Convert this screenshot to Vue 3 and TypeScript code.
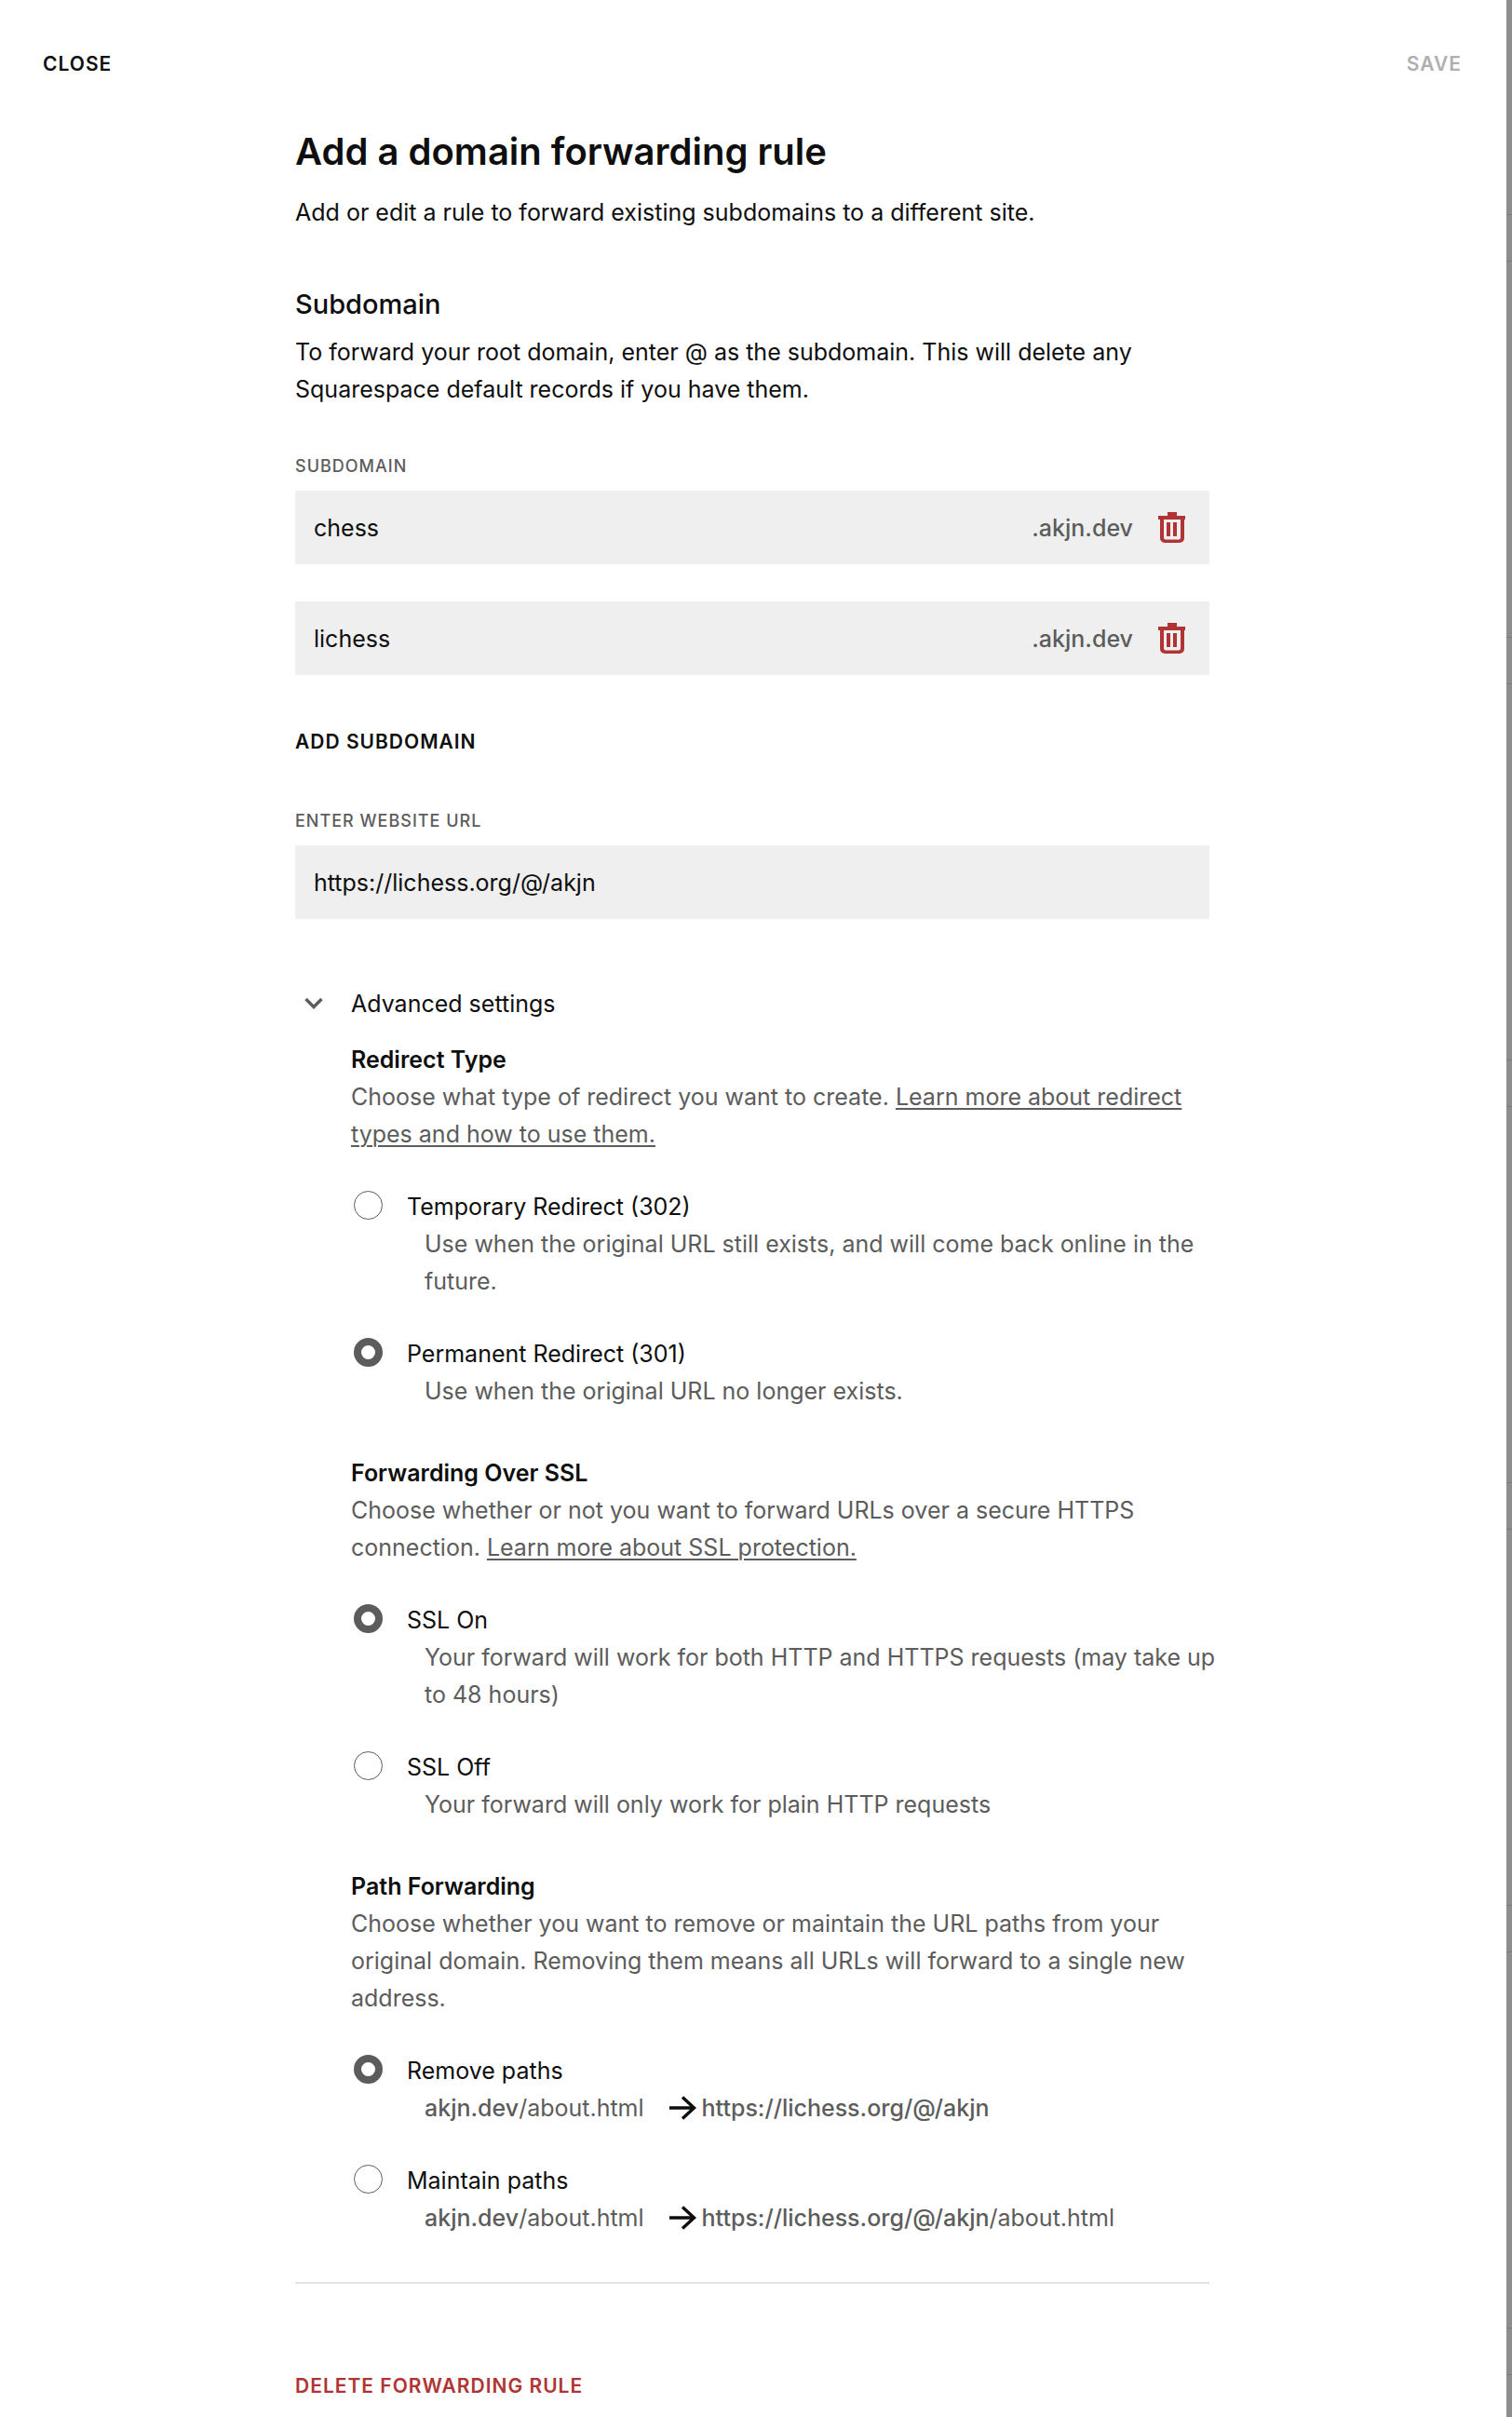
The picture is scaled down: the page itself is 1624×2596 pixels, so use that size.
<script setup lang="ts">
import { ref } from 'vue'

interface Choice {
  value: string
  label: string
  text?: string
  suffix?: string
}

interface Group {
  name: string
  title: string
  text: string
  link?: string
  choices: Choice[]
}

const domain = 'akjn.dev'
const subdomains = ref<string[]>(['chess', 'lichess'])
const url = ref('https://lichess.org/@/akjn')
const open = ref(true)

const selected = ref<Record<string, string>>({
  redirect: '301',
  ssl: 'on',
  path: 'remove',
})

const groups: Group[] = [
  {
    name: 'redirect',
    title: 'Redirect Type',
    text: 'Choose what type of redirect you want to create.',
    link: 'Learn more about redirect types and how to use them.',
    choices: [
      {
        value: '302',
        label: 'Temporary Redirect (302)',
        text: 'Use when the original URL still exists, and will come back online in the future.',
      },
      {
        value: '301',
        label: 'Permanent Redirect (301)',
        text: 'Use when the original URL no longer exists.',
      },
    ],
  },
  {
    name: 'ssl',
    title: 'Forwarding Over SSL',
    text: 'Choose whether or not you want to forward URLs over a secure HTTPS connection.',
    link: 'Learn more about SSL protection.',
    choices: [
      {
        value: 'on',
        label: 'SSL On',
        text: 'Your forward will work for both HTTP and HTTPS requests (may take up to 48 hours)',
      },
      {
        value: 'off',
        label: 'SSL Off',
        text: 'Your forward will only work for plain HTTP requests',
      },
    ],
  },
  {
    name: 'path',
    title: 'Path Forwarding',
    text: 'Choose whether you want to remove or maintain the URL paths from your original domain. Removing them means all URLs will forward to a single new address.',
    choices: [
      { value: 'remove', label: 'Remove paths', suffix: '' },
      { value: 'maintain', label: 'Maintain paths', suffix: '/about.html' },
    ],
  },
]

function addSubdomain(): void {
  subdomains.value.push('')
}

function removeSubdomain(index: number): void {
  subdomains.value.splice(index, 1)
}
</script>

<template>
  <div class="page">
    <div class="panel">
      <header class="topbar">
        <button type="button" class="action">CLOSE</button>
        <button type="button" class="action" disabled>SAVE</button>
      </header>

      <main class="content">
        <h1 class="title">Add a domain forwarding rule</h1>
        <p class="intro">Add or edit a rule to forward existing subdomains to a different site.</p>

        <h2 class="subtitle">Subdomain</h2>
        <p class="hint">
          To forward your root domain, enter @ as the subdomain. This will delete any Squarespace
          default records if you have them.
        </p>

        <label class="caption" for="subdomain-0">SUBDOMAIN</label>
        <div class="fields">
          <div v-for="(_, i) in subdomains" :key="i" class="field">
            <input
              :id="`subdomain-${i}`"
              v-model="subdomains[i]"
              class="input"
              type="text"
              aria-label="Subdomain"
            />
            <span class="domain">.{{ domain }}</span>
            <button
              type="button"
              class="trash"
              aria-label="Remove subdomain"
              @click="removeSubdomain(i)"
            >
              <svg width="30" height="33" viewBox="0 0 30 33" aria-hidden="true">
                <path d="M10 0h10v4h9v4h-1v20a5 5 0 0 1-5 5H7a5 5 0 0 1-5-5V8H0V4h10z" fill="#b03434" />
                <path d="M6 8h18v19.500a2 2 0 0 1-2 2H8a2 2 0 0 1-2-2z" fill="#efefef" />
                <path d="M9 11h4v15H9zM16 11h4v15h-4z" fill="#b03434" />
              </svg>
            </button>
          </div>
        </div>

        <button type="button" class="action add" @click="addSubdomain">ADD SUBDOMAIN</button>

        <label class="caption" for="website-url">ENTER WEBSITE URL</label>
        <div class="field">
          <input id="website-url" v-model="url" class="input" type="text" />
        </div>

        <button type="button" class="toggle" :aria-expanded="open" @click="open = !open">
          <span class="chevron">
            <svg width="20" height="14" viewBox="0 0 20 14" aria-hidden="true">
              <path d="M1.500 2 10 10.500 18.500 2" fill="none" stroke="#5c5c5c" stroke-width="3.400" />
            </svg>
          </span>
          Advanced settings
        </button>

        <div v-if="open" class="advanced">
          <section
            v-for="group in groups"
            :key="group.name"
            class="group"
            role="radiogroup"
            :aria-labelledby="`${group.name}-title`"
          >
            <div>
              <h3 :id="`${group.name}-title`" class="group-title">{{ group.title }}</h3>
              <p class="muted">
                {{ group.text }}
                <a v-if="group.link" href="#">{{ group.link }}</a>
              </p>
            </div>
            <div v-for="choice in group.choices" :key="choice.value" class="choice">
              <input
                :id="`${group.name}-${choice.value}`"
                v-model="selected[group.name]"
                class="radio"
                type="radio"
                :name="group.name"
                :value="choice.value"
              />
              <div class="choice-body">
                <label :for="`${group.name}-${choice.value}`">{{ choice.label }}</label>
                <p v-if="choice.text" class="muted choice-text">{{ choice.text }}</p>
                <p v-else class="muted choice-text route">
                  <span><b>{{ domain }}</b>/about.html</span>
                  <svg class="arrow" width="30" height="26" viewBox="0 0 30 26" aria-hidden="true">
                    <path
                      d="M0 13h27M14 1.500 26.500 13 14 24.500"
                      fill="none"
                      stroke="#0e0e0e"
                      stroke-width="3.400"
                    />
                  </svg>
                  <span><b>{{ url }}</b>{{ choice.suffix }}</span>
                </p>
              </div>
            </div>
          </section>
        </div>

        <hr class="rule" />
        <button type="button" class="action danger">DELETE FORWARDING RULE</button>
      </main>
    </div>
    <div class="backdrop"></div>
  </div>
</template>

<style>
body {
  margin: 0;
  background: #ffffff;
}
</style>

<style scoped>
.page {
  display: flex;
  min-height: 100vh;
  font-family: Inter, 'Liberation Sans', sans-serif;
  font-size: 25px;
  line-height: 40px;
  color: #0e0e0e;
}

.panel {
  flex: 1;
  min-width: 0;
  padding-right: 2px;
  background: #ffffff;
}

/* Dimmed page behind the panel, with the edges of its cards */
.backdrop {
  flex: none;
  width: 6px;
  background: repeating-linear-gradient(
    #8e8e8e 0 230px,
    #7c7c7c 230px 231px,
    #8e8e8e 231px 280px,
    #7c7c7c 280px 281px,
    #8e8e8e 281px 454px
  );
}

h1,
h2,
h3,
p {
  margin: 0;
}

button {
  padding: 0;
  border: 0;
  background: none;
  font: inherit;
  color: inherit;
  cursor: pointer;
}

.topbar {
  display: flex;
  justify-content: space-between;
  padding: 53px 46px 0;
}

.action {
  display: block;
  font-size: 21px;
  font-weight: 600;
  line-height: 32px;
  letter-spacing: 1px;
}

.action:disabled {
  color: #afafaf;
  cursor: default;
}

.content {
  box-sizing: border-box;
  max-width: 982px;
  margin: 0 auto;
  padding: 54px 0 16px;
}

.title {
  font-size: 40px;
  font-weight: 600;
  line-height: 48px;
}

.intro {
  margin-top: 21px;
}

.subtitle {
  margin-top: 59px;
  font-size: 29px;
  font-weight: 500;
  line-height: 40px;
}

.hint {
  margin-top: 11px;
}

.caption {
  display: block;
  margin: 51px 0 14px;
  font-size: 18px;
  font-weight: 500;
  line-height: 24px;
  letter-spacing: 1px;
  color: #5c5c5c;
}

.fields {
  display: flex;
  flex-direction: column;
  gap: 40px;
}

.field {
  display: flex;
  align-items: center;
  box-sizing: border-box;
  height: 79px;
  padding: 0 25px 0 20px;
  background: #efefef;
}

.input {
  flex: 1;
  min-width: 0;
  height: 40px;
  padding: 0;
  border: 0;
  outline: 0;
  background: none;
  font: inherit;
  color: inherit;
}

.domain {
  font-weight: 500;
  color: #5c5c5c;
}

.trash {
  display: flex;
  margin-left: 27px;
}

.add {
  margin: 56px 0 57px;
}

.toggle {
  display: flex;
  align-items: center;
  margin-top: 71px;
}

.chevron {
  display: flex;
  width: 50px;
  padding-left: 10px;
}

.advanced {
  display: flex;
  flex-direction: column;
  gap: 48px;
  margin-top: 20px;
  padding-left: 60px;
}

.group {
  display: flex;
  flex-direction: column;
  gap: 38px;
}

.group-title {
  font-size: 25px;
  font-weight: 600;
}

.muted {
  color: #5c5c5c;
}

.muted a {
  color: inherit;
  text-decoration: underline;
  text-decoration-thickness: 2px;
  text-underline-offset: 3px;
}

.choice {
  display: flex;
  gap: 26px;
}

.radio {
  flex: none;
  appearance: none;
  box-sizing: border-box;
  width: 31px;
  height: 31px;
  margin: 3px 0 0 3px;
  border: 1px solid #5c5c5c;
  border-radius: 50%;
  background: #ffffff;
}

.radio:checked {
  border-width: 8px;
}

.choice-body {
  flex: 1;
  min-width: 0;
}

.choice-body label {
  display: block;
}

.choice-text {
  margin-right: -20px;
  padding-left: 19px;
}

.route {
  display: flex;
  align-items: center;
}

.route b {
  font-weight: 500;
}

.arrow {
  margin: 0 5px 0 27px;
}

.rule {
  height: 2px;
  margin: 49px 0 94px;
  border: 0;
  background: #e3e3e3;
}

.danger {
  color: #b03434;
}
</style>
